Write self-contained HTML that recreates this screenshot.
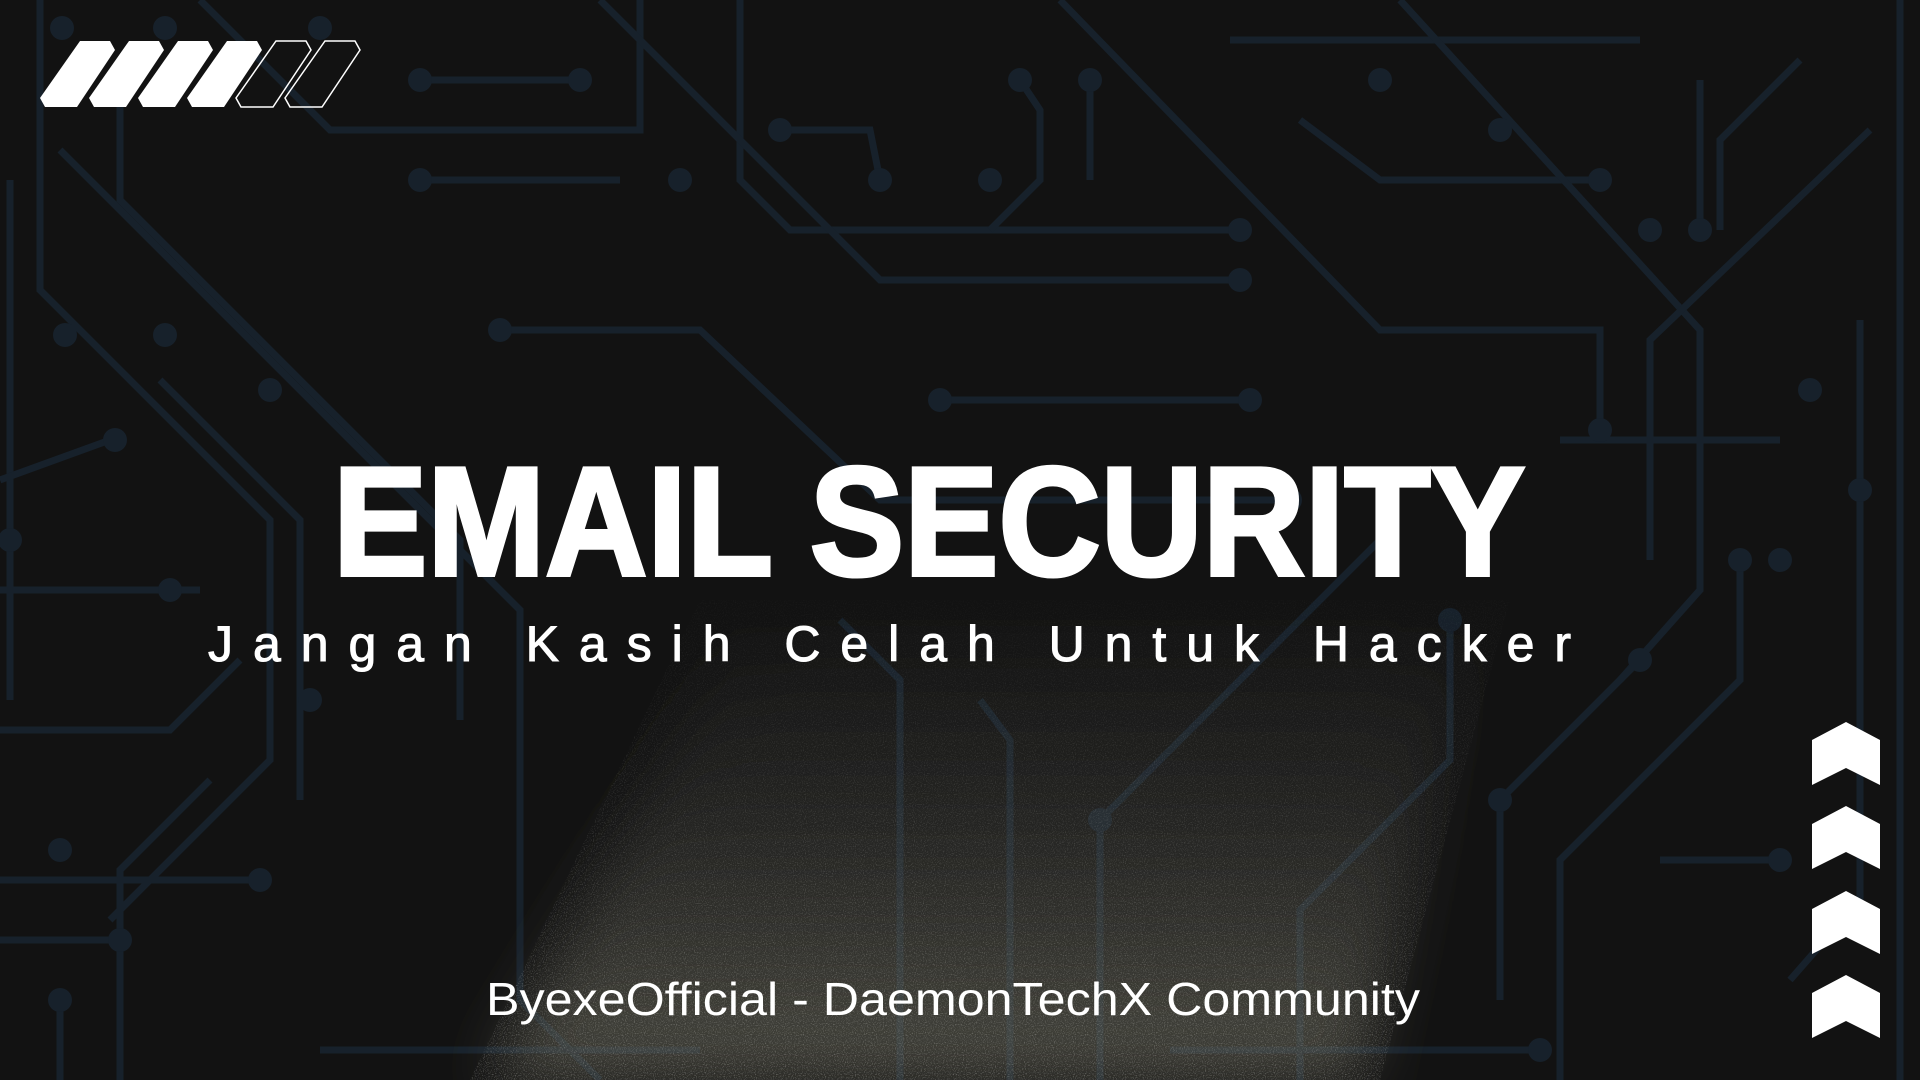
<!DOCTYPE html>
<html><head><meta charset="utf-8"><style>
html,body{margin:0;padding:0;background:#121212;width:1920px;height:1080px;overflow:hidden}
svg{position:absolute;left:0;top:0}
</style></head><body>
<svg width="1920" height="1080" viewBox="0 0 1920 1080">
<defs>
<linearGradient id="cone" x1="0" y1="0" x2="0" y2="1">
<stop offset="0" stop-color="#5a5a52" stop-opacity="0"/>
<stop offset="0.35" stop-color="#4a4a44" stop-opacity="0.25"/>
<stop offset="1" stop-color="#6b6a5c" stop-opacity="0.6"/>
</linearGradient>
<filter id="bl"><feGaussianBlur stdDeviation="30"/></filter>
<filter id="noise"><feTurbulence type="fractalNoise" baseFrequency="0.9" numOctaves="1"/><feColorMatrix values="0 0 0 0 0.8 0 0 0 0 0.8 0 0 0 0 0.75 0 0 0 2.2 -1.1"/><feComposite in2="SourceGraphic" operator="in"/></filter>
<linearGradient id="nm" x1="0" y1="0" x2="0" y2="1"><stop offset="0" stop-color="#fff" stop-opacity="0.1"/><stop offset="1" stop-color="#fff" stop-opacity="0.9"/></linearGradient>
</defs>
<g stroke="#17212b" stroke-width="7" fill="none">
<path d="M40 0V290L270 520V760L110 920"/><path d="M10 180V700"/><path d="M120 60V200L460 540V720"/>
<path d="M200 0L330 130H640V0"/><path d="M60 150L520 610V900"/><path d="M160 380L300 520V800"/>
<path d="M420 80H580"/><path d="M420 180H620"/><path d="M740 0V180L790 230H1240"/><path d="M780 130H870L880 180"/>
<path d="M1020 80L1040 110V180L990 230"/><path d="M1090 80V180"/><path d="M600 0L880 280H1240"/>
<path d="M500 330L700 330L880 500H1290"/><path d="M940 400H1250"/><path d="M1060 0L1380 330H1600V430"/>
<path d="M1230 40H1640"/><path d="M1300 120L1380 180H1600"/><path d="M1400 0L1700 330V590L1620 680"/>
<path d="M1700 80V230"/><path d="M1870 130L1650 340V560"/><path d="M1800 60L1720 140V230"/>
<path d="M1900 0V1080"/><path d="M1860 320V900L1790 980"/><path d="M1740 560V680L1560 860V1080"/>
<path d="M1640 660L1500 800V1000"/><path d="M1450 620V760L1300 910V1080"/><path d="M1380 540L1100 820V1080"/>
<path d="M0 730H170L240 660"/><path d="M0 880H260"/><path d="M0 940H120"/><path d="M60 1000V1080"/>
<path d="M210 780L120 870V1080"/><path d="M520 800V1000L600 1080"/><path d="M840 620L900 680V1080"/>
<path d="M980 700L1010 740V1080"/><path d="M1170 1050H1540"/><path d="M320 1050H700"/>
<path d="M1660 860H1780"/><path d="M1560 440H1780"/><path d="M0 590H200"/><path d="M0 480L110 440"/>
</g>
<g fill="#17212b">
<circle cx="62" cy="28" r="12"/><circle cx="165" cy="28" r="12"/><circle cx="320" cy="28" r="12"/>
<circle cx="420" cy="80" r="12"/><circle cx="580" cy="80" r="12"/><circle cx="420" cy="180" r="12"/>
<circle cx="680" cy="180" r="12"/><circle cx="780" cy="130" r="12"/><circle cx="880" cy="180" r="12"/>
<circle cx="1020" cy="80" r="12"/><circle cx="1090" cy="80" r="12"/><circle cx="990" cy="180" r="12"/>
<circle cx="1240" cy="230" r="12"/><circle cx="1240" cy="280" r="12"/><circle cx="1250" cy="400" r="12"/>
<circle cx="1380" cy="80" r="12"/><circle cx="1500" cy="130" r="12"/><circle cx="1600" cy="180" r="12"/>
<circle cx="1650" cy="230" r="12"/><circle cx="1700" cy="230" r="12"/><circle cx="1600" cy="430" r="12"/>
<circle cx="1810" cy="390" r="12"/><circle cx="1860" cy="490" r="12"/><circle cx="1780" cy="560" r="12"/>
<circle cx="165" cy="335" r="12"/><circle cx="65" cy="335" r="12"/><circle cx="270" cy="390" r="12"/>
<circle cx="115" cy="440" r="12"/><circle cx="10" cy="540" r="12"/><circle cx="170" cy="590" r="12"/>
<circle cx="310" cy="700" r="12"/><circle cx="60" cy="850" r="12"/><circle cx="120" cy="940" r="12"/>
<circle cx="60" cy="1000" r="12"/><circle cx="260" cy="880" r="12"/><circle cx="1640" cy="660" r="12"/>
<circle cx="1740" cy="560" r="12"/><circle cx="1780" cy="860" r="12"/><circle cx="1540" cy="1050" r="12"/>
<circle cx="1450" cy="620" r="12"/><circle cx="1290" cy="500" r="12"/><circle cx="940" cy="400" r="12"/>
<circle cx="500" cy="330" r="12"/><circle cx="1500" cy="800" r="12"/><circle cx="1100" cy="820" r="12"/>
</g>
<polygon points="740,620 1480,620 1360,1080 490,1080" fill="url(#cone)" filter="url(#bl)"/>
<polygon points="700,600 1510,600 1380,1080 470,1080" fill="url(#nm)" filter="url(#noise)" opacity="0.55"/>
<g fill="#fff">
<polygon points="80,41 110,41 115,50 77,107 45,107 40,98"/>
<polygon points="129,41 159,41 164,50 126,107 94,107 89,98"/>
<polygon points="178,41 208,41 213,50 175,107 143,107 138,98"/>
<polygon points="227,41 257,41 262,50 224,107 192,107 187,98"/>
</g>
<g fill="none" stroke="#fff" stroke-width="1.5">
<polygon points="276,41 306,41 311,50 273,107 241,107 236,98"/>
<polygon points="325,41 355,41 360,50 322,107 290,107 285,98"/>
</g>
<g fill="#fff">
<polygon points="1812,740 1846,722 1880,740 1880,785 1846,768 1812,785"/>
<polygon points="1812,824 1846,806 1880,824 1880,869 1846,852 1812,869"/>
<polygon points="1812,909 1846,891 1880,909 1880,954 1846,937 1812,954"/>
<polygon points="1812,993 1846,975 1880,993 1880,1038 1846,1021 1812,1038"/>
</g>
<text x="333" y="575" textLength="1192" lengthAdjust="spacingAndGlyphs" font-family="Liberation Sans, sans-serif" font-weight="bold" font-size="155" fill="#fff" stroke="#fff" stroke-width="4">EMAIL SECURITY</text>
<text x="208" y="661" textLength="1363" lengthAdjust="spacing" font-family="Liberation Sans, sans-serif" font-size="50" fill="#fff" stroke="#fff" stroke-width="1">Jangan Kasih Celah Untuk Hacker</text>
<text x="486" y="1015" textLength="934" lengthAdjust="spacingAndGlyphs" font-family="Liberation Sans, sans-serif" font-size="46" fill="#fff">ByexeOfficial - DaemonTechX Community</text>
</svg>
</body></html>
